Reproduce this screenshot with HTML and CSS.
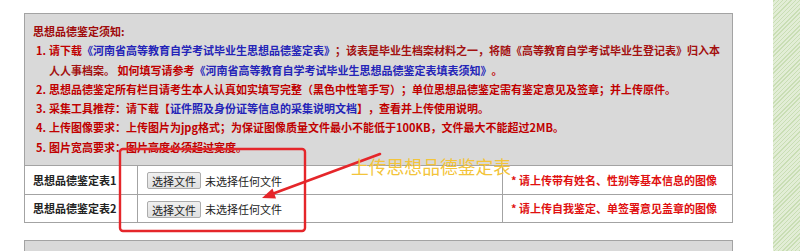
FILE: index.html
```html
<!DOCTYPE html>
<html lang="zh-CN">
<head>
  <meta charset="UTF-8" />
  <title>思想品德鉴定表上传</title>
  <link rel="stylesheet" href="styles.css">
</head>
<body>
  <div class="page">
    <div class="main">
      <div class="panel">
        <div class="notice">
          <div class="notice-title">思想品德鉴定须知:</div>
          <div class="item">
            <span class="num">1.</span>
            <span class="txt">请下载<a class="link">《河南省高等教育自学考试毕业生思想品德鉴定表》</a><span class="dark">；该表是毕业生档案材料之一，将随《高等教育自学考试毕业生登记表》归入本人人事档案。</span> 如何填写请参考<a class="link">《河南省高等教育自学考试毕业生思想品德鉴定表填表须知》</a>。</span>
          </div>
          <div class="item">
            <span class="num">2.</span>
            <span class="txt">思想品德鉴定所有栏目请考生本人认真如实填写完整（黑色中性笔手写）；单位思想品德鉴定需有鉴定意见及签章；并上传原件。</span>
          </div>
          <div class="item">
            <span class="num">3.</span>
            <span class="txt">采集工具推荐：请下载【<a class="link">证件照及身份证等信息的采集说明文档</a>】，查看并上传使用说明。</span>
          </div>
          <div class="item">
            <span class="num">4.</span>
            <span class="txt">上传图像要求：上传图片为jpg格式；为保证图像质量文件最小不能低于100KB，文件最大不能超过2MB。</span>
          </div>
          <div class="item">
            <span class="num">5.</span>
            <span class="txt">图片宽高要求：图片高度必须超过宽度。</span>
          </div>
        </div>
        <table class="upload">
          <tr>
            <td class="label">思想品德鉴定表1</td>
            <td class="file"><button class="pick">选择文件</button><span class="none">未选择任何文件</span></td>
            <td class="hint">* 请上传带有姓名、性别等基本信息的图像</td>
          </tr>
          <tr>
            <td class="label">思想品德鉴定表2</td>
            <td class="file"><button class="pick">选择文件</button><span class="none">未选择任何文件</span></td>
            <td class="hint">* 请上传自我鉴定、单签署意见盖章的图像</td>
          </tr>
        </table>
      </div>
      <div class="next-panel"></div>

      <!-- annotation drawn over the screenshot -->
      <svg class="marks" width="773" height="251" viewBox="0 0 773 251">
        <rect x="120" y="149" width="185" height="82" rx="3" fill="none" stroke="#e5262a" stroke-width="2.4"/>
        <line x1="380" y1="154" x2="272" y2="194" stroke="#e5262a" stroke-width="2.6" stroke-linecap="round"/>
        <polygon points="262,198 272.5,188.5 276,198.5" fill="#e5262a"/>
      </svg>
      <span class="mark-label">上传思想品德鉴定表</span>
    </div>
    <div class="side"></div>
  </div>
</body>
</html>
```

FILE: styles.css
```css
body {
  margin: 0;
  background: #fff;
  font-family: "Microsoft YaHei", "Noto Sans CJK SC", "Noto Sans", sans-serif;
  font-size: 11px;
  color: #222;
  text-spacing-trim: space-all;
}

.page {
  display: flex;
  height: 251px;
  overflow: hidden;
}

.main {
  position: relative;
  flex: 0 0 773px;
  padding: 13px 0 0 24px;
  box-sizing: border-box;
}

.side {
  flex: 1;
  background: repeating-linear-gradient(-45deg, #c9deb4 0, #c9deb4 1px, #e2edd6 1px, #e2edd6 3px);
}

.panel {
  width: 709px;
  box-sizing: border-box;
  border: 1px solid #a3a3a3;
}

.notice {
  background: #d9d9d9;
  padding: 8px 6px 8px 8px;
  line-height: 19.3px;
  font-weight: bold;
}

.notice-title {
  color: #a00a0a;
}

.item {
  display: flex;
  padding-left: 3px;
  color: #c00000;
}

.item .num {
  flex: 0 0 13px;
}

.item .txt {
  flex: 1;
}

.dark {
  color: #a31010;
}

.link {
  color: #2424b8;
}

.upload {
  width: 100%;
  border-collapse: collapse;
  background: #fff;
}

.upload td {
  height: 27.5px;
  padding: 0;
  border-top: 1px solid #a3a3a3;
  vertical-align: middle;
}

.upload .label {
  width: 104px;
  padding-left: 8px;
  font-weight: bold;
  border-right: 1px solid #a3a3a3;
}

.upload .file {
  width: 355px;
  padding-left: 9px;
  border-right: 1px solid #a3a3a3;
}

.upload .hint {
  padding-left: 8px;
  color: #e01010;
  font-weight: bold;
}

.pick {
  font-family: inherit;
  font-size: 11px;
  height: 17px;
  width: 54px;
  padding: 0;
  border: 1px solid #acacac;
  border-radius: 2px;
  background: linear-gradient(#f0f0f0, #e0e0e0);
  color: #222;
  vertical-align: middle;
}

.none {
  margin-left: 4px;
  vertical-align: middle;
}

.next-panel {
  width: 709px;
  height: 40px;
  margin-top: 17px;
  box-sizing: border-box;
  border: 1px solid #a3a3a3;
  background: #d9d9d9;
}

.marks {
  position: absolute;
  left: 0;
  top: 0;
  pointer-events: none;
}

.mark-label {
  position: absolute;
  left: 351px;
  top: 156px;
  font-size: 17.8px;
  line-height: 20px;
  color: #f3c43a;
  white-space: nowrap;
}
```
